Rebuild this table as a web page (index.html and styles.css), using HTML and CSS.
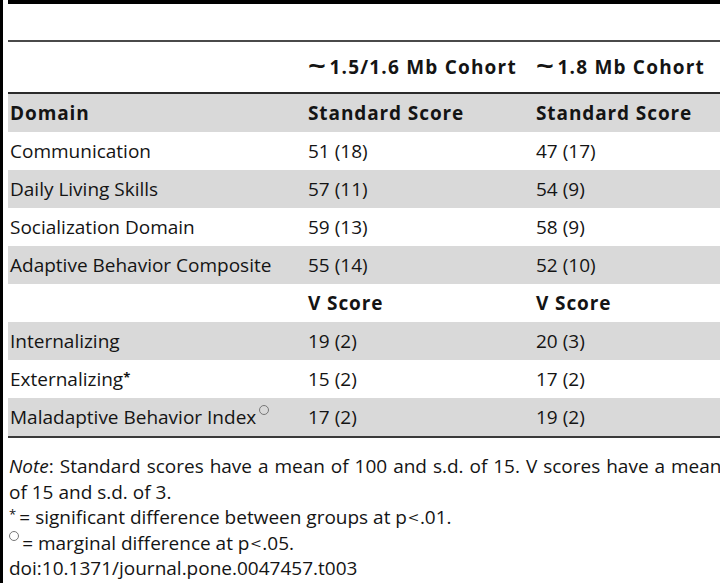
FILE: index.html
```html
<!DOCTYPE html>
<html>
<head>
<meta charset="utf-8">
<link rel="stylesheet" href="styles.css">
</head>
<body>
<div class="frame">
  <div class="topbar"></div>
  <div class="gap"></div>
  <table class="data">
    <colgroup>
      <col class="c1"><col class="c2"><col class="c3">
    </colgroup>
    <thead>
      <tr class="cohort">
        <th></th>
        <th><span class="tilde">~</span>1.5/1.6 Mb Cohort</th>
        <th><span class="tilde">~</span>1.8 Mb Cohort</th>
      </tr>
    </thead>
    <tbody>
      <tr class="shade sub">
        <th>Domain</th>
        <th>Standard Score</th>
        <th>Standard Score</th>
      </tr>
      <tr><td>Communication</td><td>51 (18)</td><td>47 (17)</td></tr>
      <tr class="shade"><td>Daily Living Skills</td><td>57 (11)</td><td>54 (9)</td></tr>
      <tr><td>Socialization Domain</td><td>59 (13)</td><td>58 (9)</td></tr>
      <tr class="shade"><td>Adaptive Behavior Composite</td><td>55 (14)</td><td>52 (10)</td></tr>
      <tr class="sub"><th></th><th>V Score</th><th>V Score</th></tr>
      <tr class="shade"><td>Internalizing</td><td>19 (2)</td><td>20 (3)</td></tr>
      <tr><td>Externalizing<span class="ast">*</span></td><td>15 (2)</td><td>17 (2)</td></tr>
      <tr class="shade last"><td>Maladaptive Behavior Index<span class="circ"></span></td><td>17 (2)</td><td>19 (2)</td></tr>
    </tbody>
  </table>
  <div class="notes">
    <p class="wide"><em>Note</em>: Standard scores have a mean of 100 and s.d. of 15. V scores have a mean</p>
    <p>of 15 and s.d. of 3.</p>
    <p><span class="nast">*</span>&thinsp;= significant difference between groups at p<span class="lt">&lt;</span>.01.</p>
    <p><span class="ncirc"></span>&thinsp;= marginal difference at p<span class="lt">&lt;</span>.05.</p>
    <p>doi:10.1371/journal.pone.0047457.t003</p>
  </div>
</div>
</body>
</html>
```
FILE: styles.css
```css
html, body {
  margin: 0;
  padding: 0;
  background: #fff;
  overflow: hidden;
}
body {
  width: 720px;
  height: 583px;
  font-family: "Open Sans", "Noto Sans", sans-serif;
  color: #141414;
}
.frame {
  border-left: 3px solid #000;
  padding-left: 5px;
  height: 583px;
  width: 720px;
  box-sizing: border-box;
  overflow: hidden;
}
.topbar {
  height: 4px;
  background: #000;
}
.gap {
  height: 36px;
}
.data {
  border-collapse: collapse;
  width: 712px;
  font-size: 19px;
  table-layout: fixed;
}
.c1 { width: 298px; }
.c2 { width: 228px; }
.c3 { width: 186px; }
.data th, .data td {
  text-align: left;
  padding: 0 0 0 2px;
  white-space: nowrap;
  height: 38px;
  line-height: 24px;
  overflow: visible;
}
.data th {
  font-weight: 700;
  letter-spacing: 0.9px;
}
.cohort th {
  letter-spacing: 1.2px;
}
.tilde {
  display: inline-block;
  font-size: 25px;
  line-height: 0;
  transform: scaleX(1.25);
  margin: 0 4px 0 2px;
  vertical-align: -1px;
}
.cohort th {
  height: 50px;
  border-top: 2px solid #4a4a4a;
  border-bottom: 2px solid #2b2b2b;
}
.shade { background: #d9d9d9; }
.last td { border-bottom: 2px solid #3a3a3a; }
.ast {
  font-size: 13px;
  vertical-align: 4px;
  line-height: 0;
  font-weight: 700;
}
.circ {
  display: inline-block;
  width: 8px;
  height: 8px;
  border: 1px solid #777;
  border-radius: 50%;
  margin-left: 3px;
  vertical-align: 9px;
}
.notes {
  font-size: 19px;
  padding: 16px 0 0 1px;
  white-space: nowrap;
}
.notes p {
  margin: 0;
  height: 25.5px;
  line-height: 25.5px;
}
.notes .wide {
  word-spacing: 1px;
}
.lt {
  display: inline-block;
  transform: scaleY(0.8);
  margin: 0 1px;
}
.nast {
  font-size: 13px;
  vertical-align: 5px;
  line-height: 0;
}
.ncirc {
  display: inline-block;
  width: 8px;
  height: 8px;
  border: 1px solid #777;
  border-radius: 50%;
  vertical-align: 9px;
  line-height: 0;
}
```
